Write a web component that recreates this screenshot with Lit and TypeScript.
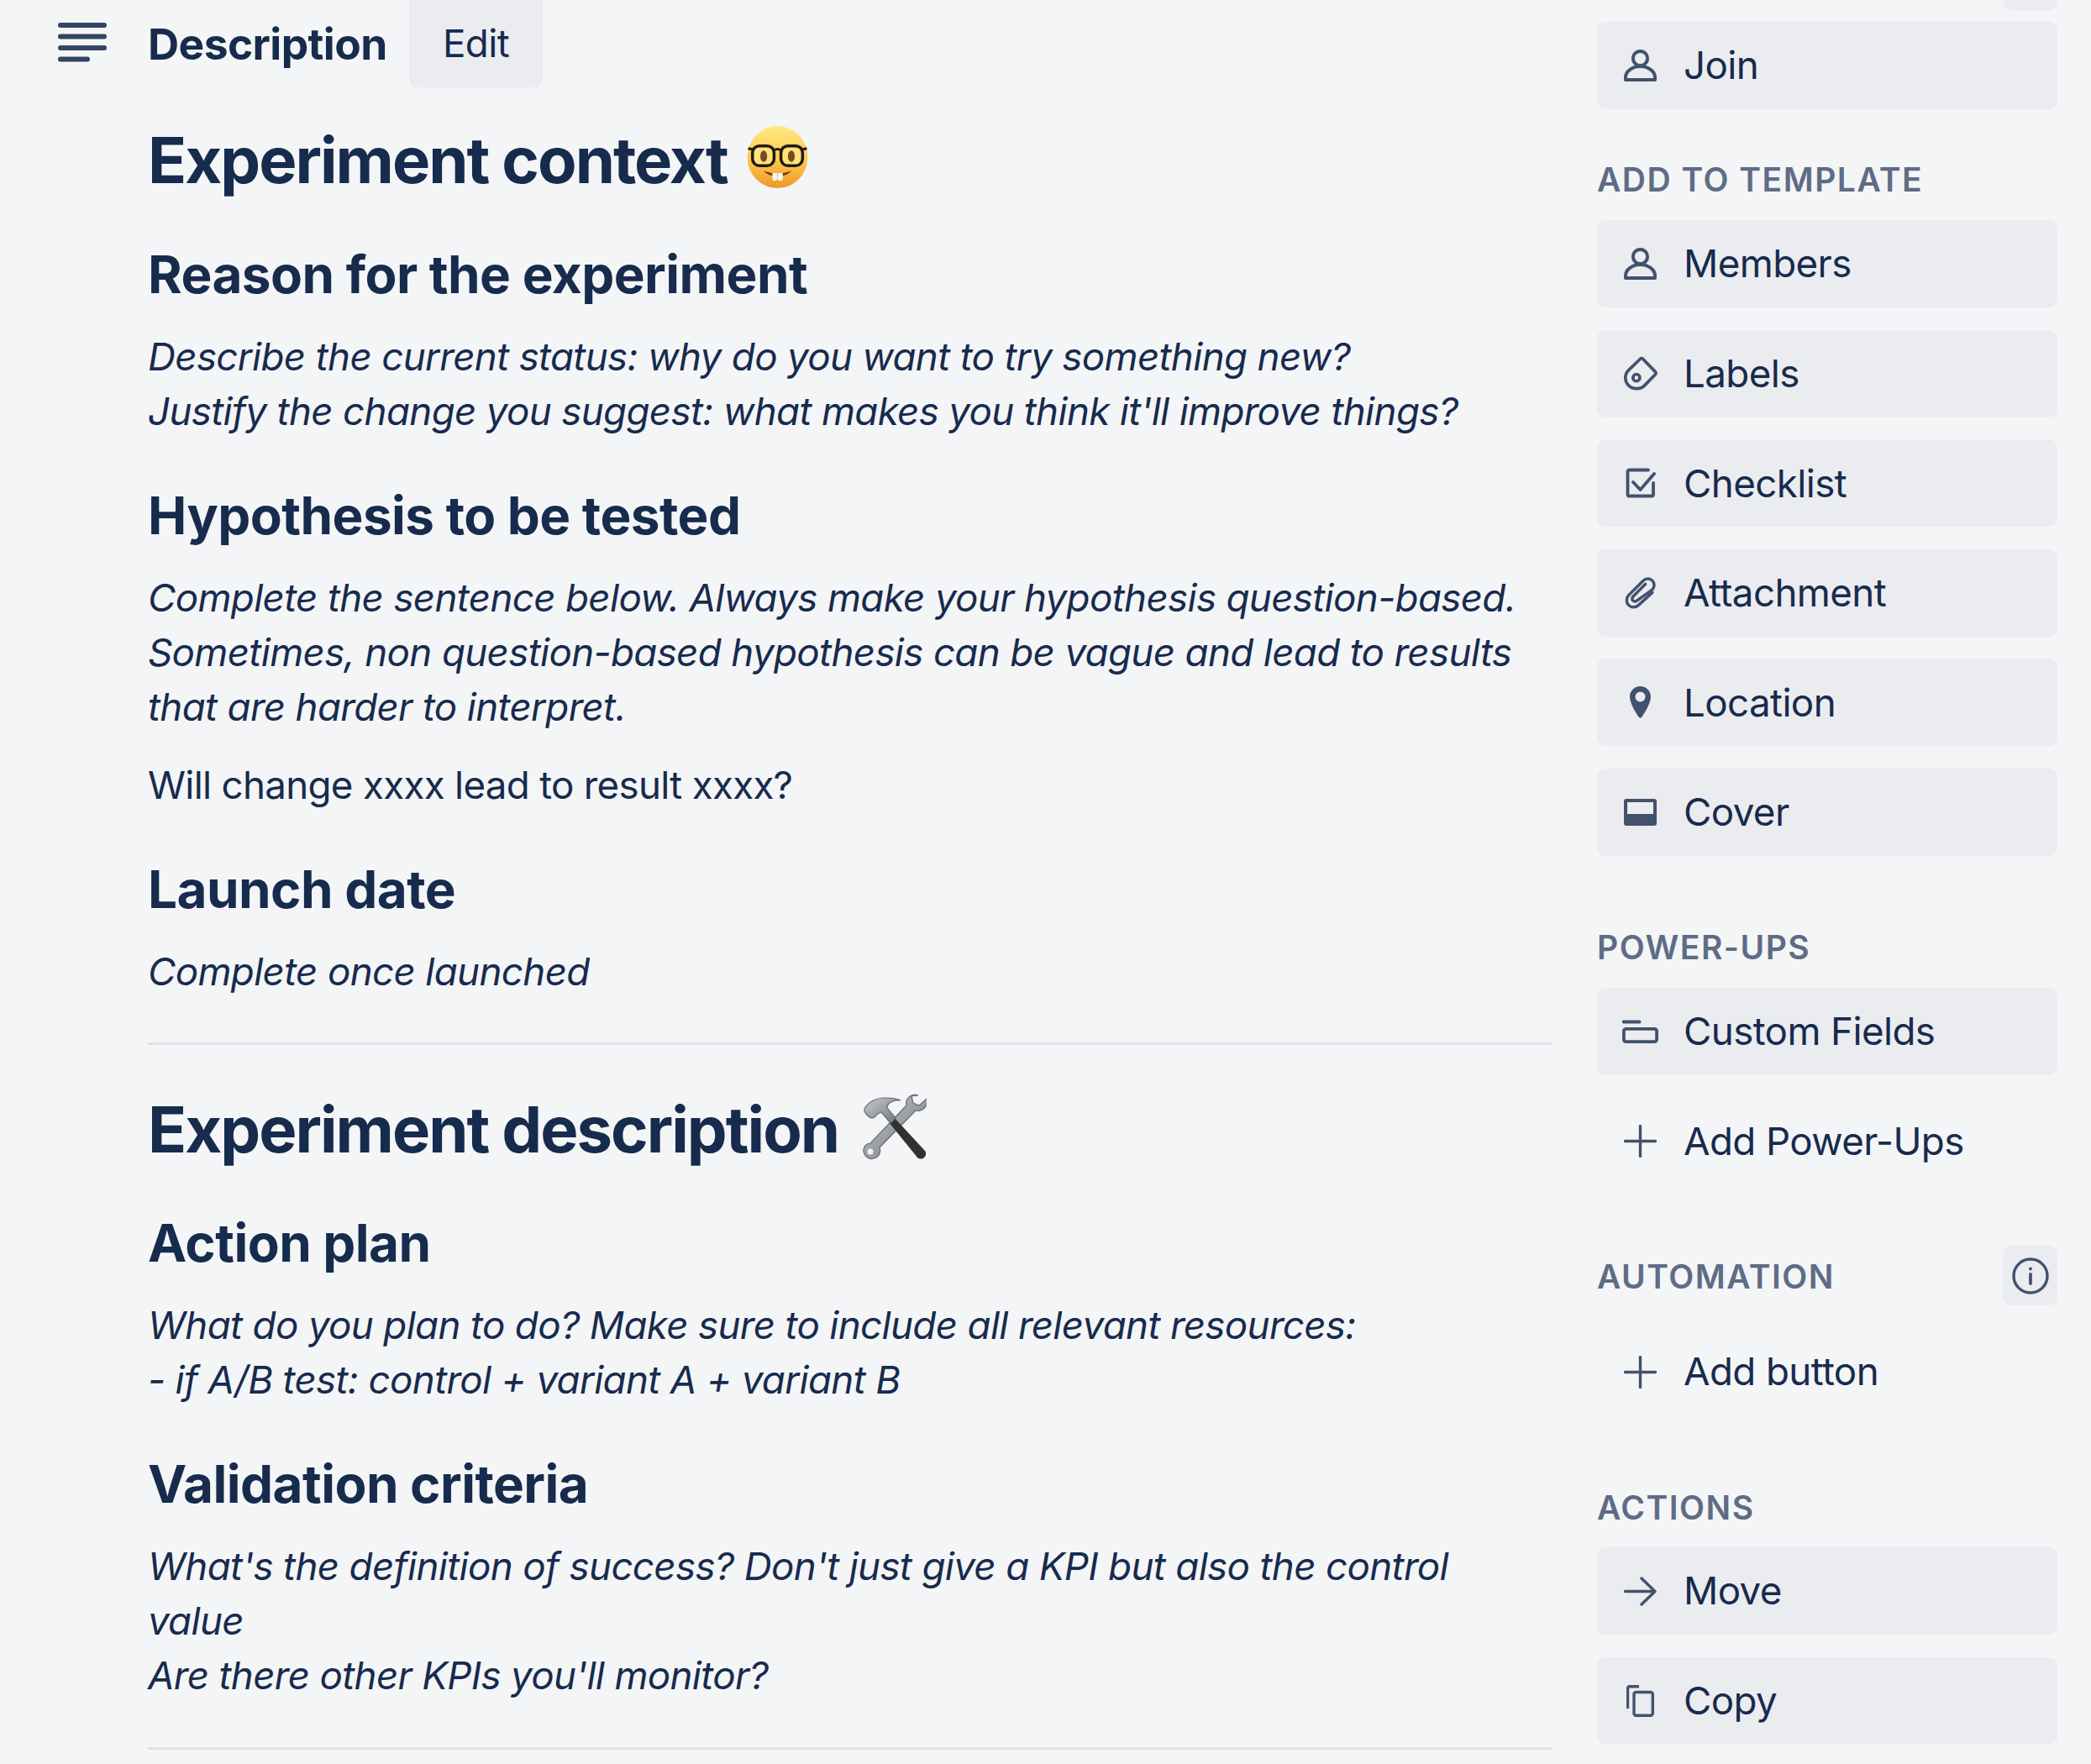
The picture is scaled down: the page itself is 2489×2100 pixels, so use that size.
import { LitElement, html, css } from "lit";
import { customElement } from "lit/decorators.js";

const ic = "#42526e";
const icons: Record<string, any> = {
  person: html`<svg class="ic" width="39" height="38" viewBox="0 0 39 38" fill="none" stroke="${ic}" stroke-width="4" stroke-linejoin="round"><circle cx="19.5" cy="10.5" r="8.6"/><path d="M2 36v-3c0-7 8-13 17.5-13S37 26 37 33v3z"/></svg>`,
  label: html`<svg class="ic" width="42" height="41" viewBox="0 0 40 40" fill="none" stroke="${ic}" stroke-width="3.6" stroke-linejoin="round"><path d="M19.5 3.2a2 2 0 0 1 3 0L37 18.2a2 2 0 0 1 0 3L24.5 34c-5 5-13.5 5-18.5 0C1 29 1 21 6 16.2z"/><circle cx="15" cy="25" r="4"/></svg>`,
  check: html`<svg class="ic" width="36" height="36" viewBox="0 0 36 36" fill="none" stroke="${ic}" stroke-width="3.8" stroke-linejoin="round" stroke-linecap="round"><path d="M27 2.5H4.5a2 2 0 0 0-2 2V31.5a2 2 0 0 0 2 2H31a2 2 0 0 0 2-2V18"/><path d="M9 17l8.500 9L34 7"/></svg>`,
  clip: html`<svg class="ic" width="38" height="39" viewBox="0 0 37 38" fill="none" stroke="${ic}" stroke-width="3.4" stroke-linecap="round"><path d="M32 19L16 33.500c-3.500 3.200-8.500 3-11.500 0-3-3-3-8 0-11.500L21 5.500c3-3 8-3.500 11-.5 3 3 2.500 8 0 10.500L14.500 28c-1.500 1.500-3.800 1.500-5 .3-1.300-1.300-1.200-3.500.3-5L24 9"/></svg>`,
  pin: html`<svg class="ic" width="25" height="38" viewBox="0 0 25 38"><path fill="${ic}" fill-rule="evenodd" d="M12.500 0C5.600 0 0 5.500 0 12.500c0 7.500 7.500 20 11 24.500.8 1 2.200 1 3 0C17.500 32.500 25 20 25 12.500 25 5.500 19.400 0 12.500 0zm0 6.500a6 6 0 1 1 0 12 6 6 0 0 1 0-12z"/></svg>`,
  cover: html`<svg class="ic" width="39" height="32" viewBox="0 0 39 32"><path fill="${ic}" fill-rule="evenodd" d="M3 0h33a3 3 0 0 1 3 3v26a3 3 0 0 1-3 3H3a3 3 0 0 1-3-3V3a3 3 0 0 1 3-3zm1 4v14h31V4z"/></svg>`,
  fields: html`<svg class="ic" width="43" height="28" viewBox="0 0 43 28" fill="none" stroke="${ic}" stroke-width="3.800"><path d="M1.500 2.500h19" stroke-linecap="round"/><rect x="1.900" y="10.900" width="39.200" height="15.200" rx="2.500"/></svg>`,
  plus: html`<svg class="ic" width="39" height="39" viewBox="0 0 39 39" fill="none" stroke="${ic}" stroke-width="3.400" stroke-linecap="round"><path d="M19.500 1.500v36M1.500 19.500h36"/></svg>`,
  arrow: html`<svg class="ic" width="39" height="35" viewBox="0 0 39 35" fill="none" stroke="${ic}" stroke-width="3.400" stroke-linecap="round" stroke-linejoin="round"><path d="M1.500 17.500h35M21 2l16 15.500L21 33"/></svg>`,
  copy: html`<svg class="ic" width="33" height="38" viewBox="0 0 33 38" fill="none" stroke="${ic}" stroke-width="3.400" stroke-linejoin="round"><path d="M15 1.800H3.500a2 2 0 0 0-2 2V28"/><rect x="9" y="8.500" width="22.300" height="27.800" rx="2.500"/></svg>`,
};

const nerd = html`<svg class="emoji-a" width="73" height="74" viewBox="0 0 70 72">
  <defs>
    <linearGradient id="nf" x1="0" y1="0" x2="0" y2="1"><stop offset="0" stop-color="#ffe985"/><stop offset=".55" stop-color="#fdc94a"/><stop offset="1" stop-color="#ee962c"/></linearGradient>
  </defs>
  <ellipse cx="35" cy="36" rx="35" ry="36" fill="url(#nf)"/>
  <rect x="6" y="23" width="25" height="23" rx="8" fill="#ffe27a" stroke="#1f1a12" stroke-width="3.400"/>
  <rect x="39" y="23" width="25" height="23" rx="8" fill="#ffe27a" stroke="#1f1a12" stroke-width="3.400"/>
  <path d="M31 28q4-2.500 8 0M1 26l5 1M69 26l-5 1" stroke="#1f1a12" stroke-width="3" fill="none"/>
  <ellipse cx="19" cy="35" rx="4" ry="6.500" fill="#7a4a1c"/>
  <ellipse cx="51" cy="35" rx="4" ry="6.500" fill="#7a4a1c"/>
  <path d="M19 52q16 6 32 0-5 6-16 6t-16-6z" fill="#6b3a12"/>
  <path d="M29 54.500h5.800v6a2.900 2.900 0 0 1-5.800 0zM35.200 54.500H41v6a2.900 2.900 0 0 1-5.800 0z" fill="#f4f4f0"/>
</svg>`;

const tools = html`<svg class="emoji-b" width="76" height="80" viewBox="0 0 76 80">
  <defs>
    <linearGradient id="st" x1="0" y1="0" x2="1" y2="1"><stop offset="0" stop-color="#c9ccd0"/><stop offset="1" stop-color="#6e7176"/></linearGradient>
  </defs>
  <path d="M66 3c-8-3-16 4-14 12L9 60c-5 0-9 5-8 10 1 6 7 10 12 8 6-1 9-7 7-13l43-44c8 2 16-6 13-14l-9 8-7-3-2-8z" fill="url(#st)" stroke="#6a6d72" stroke-width="1.200"/>
  <circle cx="9" cy="70" r="3.500" fill="#f2f2f2"/>
  <path d="M31 35l6-6 37 40c2 3 1 6-1 8s-6 2-8 0z" fill="#2f3133"/>
  <path d="M2 19c4-8 14-13 24-13 6 0 14 0 19 3-9-1-16 3-16 9l10 12-6 6L22 23c-3 1-5 2-7 5-1 2-3 2-5 2-4-2-9-7-8-11z" fill="url(#st)" stroke="#6a6d72" stroke-width="1.200"/>
</svg>`;

@customElement("app-root")
export class AppRoot extends LitElement {
  static styles = css`
    :host {
      display: flex;
      width: 2489px;
      height: 2100px;
      overflow: hidden;
      background: #f4f5f7;
      color: #172b4d;
      font-family: Inter, "Liberation Sans", sans-serif;
      font-size: 45.7px;
      line-height: 65.3px;
    }
    .main { width: 1848px; padding-left: 68px; box-sizing: border-box; flex: none; }
    .head { display: flex; align-items: flex-start; height: 104px; }
    .burger { margin-top: 27px; flex: none; display: block; }
    .head h3 { margin: 20px 0 0 48px; font-size: 51.500px; line-height: 65px; font-weight: 700; letter-spacing: -0.6px; white-space: nowrap; width: 311px; flex: none; }
    .edit { width: 159px; height: 104px; border-radius: 0 0 10px 10px; background: #ebecf0; display: flex; align-items: center; justify-content: center; letter-spacing: -0.6px; }
    .doc { margin-left: 108px; }
    h1 { margin: 47px 0 0; font-size: 76px; line-height: 78px; font-weight: 700; letter-spacing: -2px; display: flex; align-items: center; white-space: nowrap; }
    .emoji-a { margin-left: 23px; margin-top: -6px; flex: none; }
    .emoji-b { margin-left: 29px; margin-top: -6px; flex: none; }
    h1.second { margin-top: 61px; }
    h2 { margin: 58px 0 33px; font-size: 62px; line-height: 65px; font-weight: 700; letter-spacing: -0.55px; }
    h1 + h2 { margin-top: 65px; }
    h1.second + h2 { margin-top: 64px; }
    p { margin: 0 0 28px; letter-spacing: -0.7px; }
    em { font-style: italic; letter-spacing: -0.66px; }
    hr { border: none; height: 3px; background: #dfe1e6; margin: 52px 0 0; }
    .side { width: 548px; margin-left: 53px; flex: none; display: flex; flex-direction: column; }
    .side > * { flex: none; }
    .stub { align-self: flex-end; width: 65px; height: 12px; background: #ebecf0; border-radius: 0 0 10px 10px; margin-bottom: 14px; }
    .btn { height: 104px; border-radius: 10px; background: #ebecf0; display: flex; align-items: center; margin-bottom: 26.600px; letter-spacing: -0.6px; }
    .btn.plain { background: transparent; }
    .icw { width: 103px; flex: none; display: flex; justify-content: center; margin-right: 3px; }
    .text { margin-left: -3px; }
    .lab { font-size: 39px; line-height: 52px; font-weight: 600; letter-spacing: 1.5px; color: #5e6c84; margin: 0 0 22px; }
    .lab.first { margin-top: 31.400px; }
    .lab.gap { margin-top: 56.400px; }
    .lab.last { margin-top: 57.400px; margin-bottom: 21px; }
    .row { display: flex; align-items: center; justify-content: space-between; margin: 46px 0 27px; height: 71px; }
    .row .lab { margin: 3px 0 0 0; }
    .info { width: 65px; height: 71px; border-radius: 10px; background: #ebecf0; display: flex; align-items: center; justify-content: center; }
  `;

  private btn(icon: string, text: string, plain = false) {
    return html`<div class="btn ${plain ? "plain" : ""}"><span class="icw">${icons[icon]}</span><span class="text">${text}</span></div>`;
  }

  render() {
    return html`
      <div class="main">
        <div class="head">
          <svg class="burger" width="60" height="48" viewBox="0 0 60 48" fill="#344563">
            <rect x="1" y="0" width="58" height="6" rx="3"/><rect x="1" y="13.500" width="58" height="6" rx="3"/><rect x="1" y="27" width="58" height="6" rx="3"/><rect x="1" y="40.500" width="38" height="6" rx="3"/>
          </svg>
          <h3>Description</h3>
          <div class="edit">Edit</div>
        </div>
        <div class="doc">
          <h1>Experiment context ${nerd}</h1>
          <h2>Reason for the experiment</h2>
          <p><em>Describe the current status: why do you want to try something new?<br>Justify the change you suggest: what makes you think it'll improve things?</em></p>
          <h2>Hypothesis to be tested</h2>
          <p><em>Complete the sentence below. Always make your hypothesis question-based.<br>Sometimes, non question-based hypothesis can be vague and lead to results<br>that are harder to interpret.</em></p>
          <p>Will change xxxx lead to result xxxx?</p>
          <h2>Launch date</h2>
          <p><em>Complete once launched</em></p>
          <hr>
          <h1 class="second">Experiment description ${tools}</h1>
          <h2>Action plan</h2>
          <p><em>What do you plan to do? Make sure to include all relevant resources:<br>- if A/B test: control + variant A + variant B</em></p>
          <h2>Validation criteria</h2>
          <p><em>What's the definition of success? Don't just give a KPI but also the control<br>value<br>Are there other KPIs you'll monitor?</em></p>
          <hr>
        </div>
      </div>
      <div class="side">
        <div class="stub"></div>
        ${this.btn("person", "Join")}
        <div class="lab first">ADD TO TEMPLATE</div>
        ${this.btn("person", "Members")}
        ${this.btn("label", "Labels")}
        ${this.btn("check", "Checklist")}
        ${this.btn("clip", "Attachment")}
        ${this.btn("pin", "Location")}
        ${this.btn("cover", "Cover")}
        <div class="lab gap">POWER-UPS</div>
        ${this.btn("fields", "Custom Fields")}
        ${this.btn("plus", "Add Power-Ups", true)}
        <div class="row">
          <div class="lab">AUTOMATION</div>
          <div class="info"><svg width="44" height="44" viewBox="0 0 44 44" fill="none" stroke="${ic}" stroke-width="3.400"><circle cx="22" cy="22" r="20"/><path d="M22 20v11" stroke-width="3.800" stroke-linecap="round"/><circle cx="22" cy="13.500" r="2" fill="${ic}" stroke="none"/></svg></div>
        </div>
        ${this.btn("plus", "Add button", true)}
        <div class="lab last">ACTIONS</div>
        ${this.btn("arrow", "Move")}
        ${this.btn("copy", "Copy")}
      </div>
    `;
  }
}
